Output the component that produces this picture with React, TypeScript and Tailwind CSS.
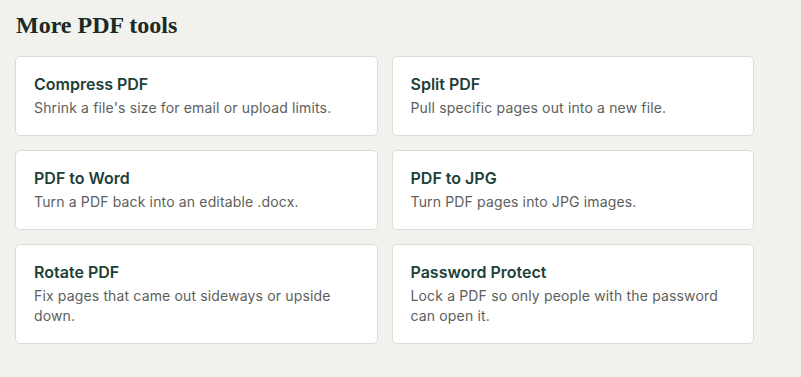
const tools = [
  { title: 'Compress PDF', desc: "Shrink a file's size for email or upload limits." },
  { title: 'Split PDF', desc: 'Pull specific pages out into a new file.' },
  { title: 'PDF to Word', desc: 'Turn a PDF back into an editable .docx.' },
  { title: 'PDF to JPG', desc: 'Turn PDF pages into JPG images.' },
  { title: 'Rotate PDF', desc: 'Fix pages that came out sideways or upside down.' },
  { title: 'Password Protect', desc: 'Lock a PDF so only people with the password can open it.' },
];

export default function App() {
  return (
    <div className="min-h-[377px] bg-[#f1f1ed] px-[15px] pt-[11px] font-['Inter',sans-serif]">
      <h2 className="mb-[17px] pl-px font-['Liberation_Serif',serif] text-[24px] font-bold leading-[28px] text-[#1b2a25]">
        More PDF tools
      </h2>
      <div className="grid w-[739px] grid-cols-2 gap-x-[14px] gap-y-[14px]">
        {tools.map((tool) => (
          <a
            key={tool.title}
            href="#"
            className="block rounded-[5px] border border-[#dcdcd7] bg-white px-[18px] pb-[17px] pt-[16px]"
          >
            <p className="text-[16px] font-semibold leading-[22px] text-[#1d4038]">{tool.title}</p>
            <p className="mt-[3px] text-[14px] leading-[20px] tracking-[0.15px] text-[#5c605d]">{tool.desc}</p>
          </a>
        ))}
      </div>
    </div>
  );
}
